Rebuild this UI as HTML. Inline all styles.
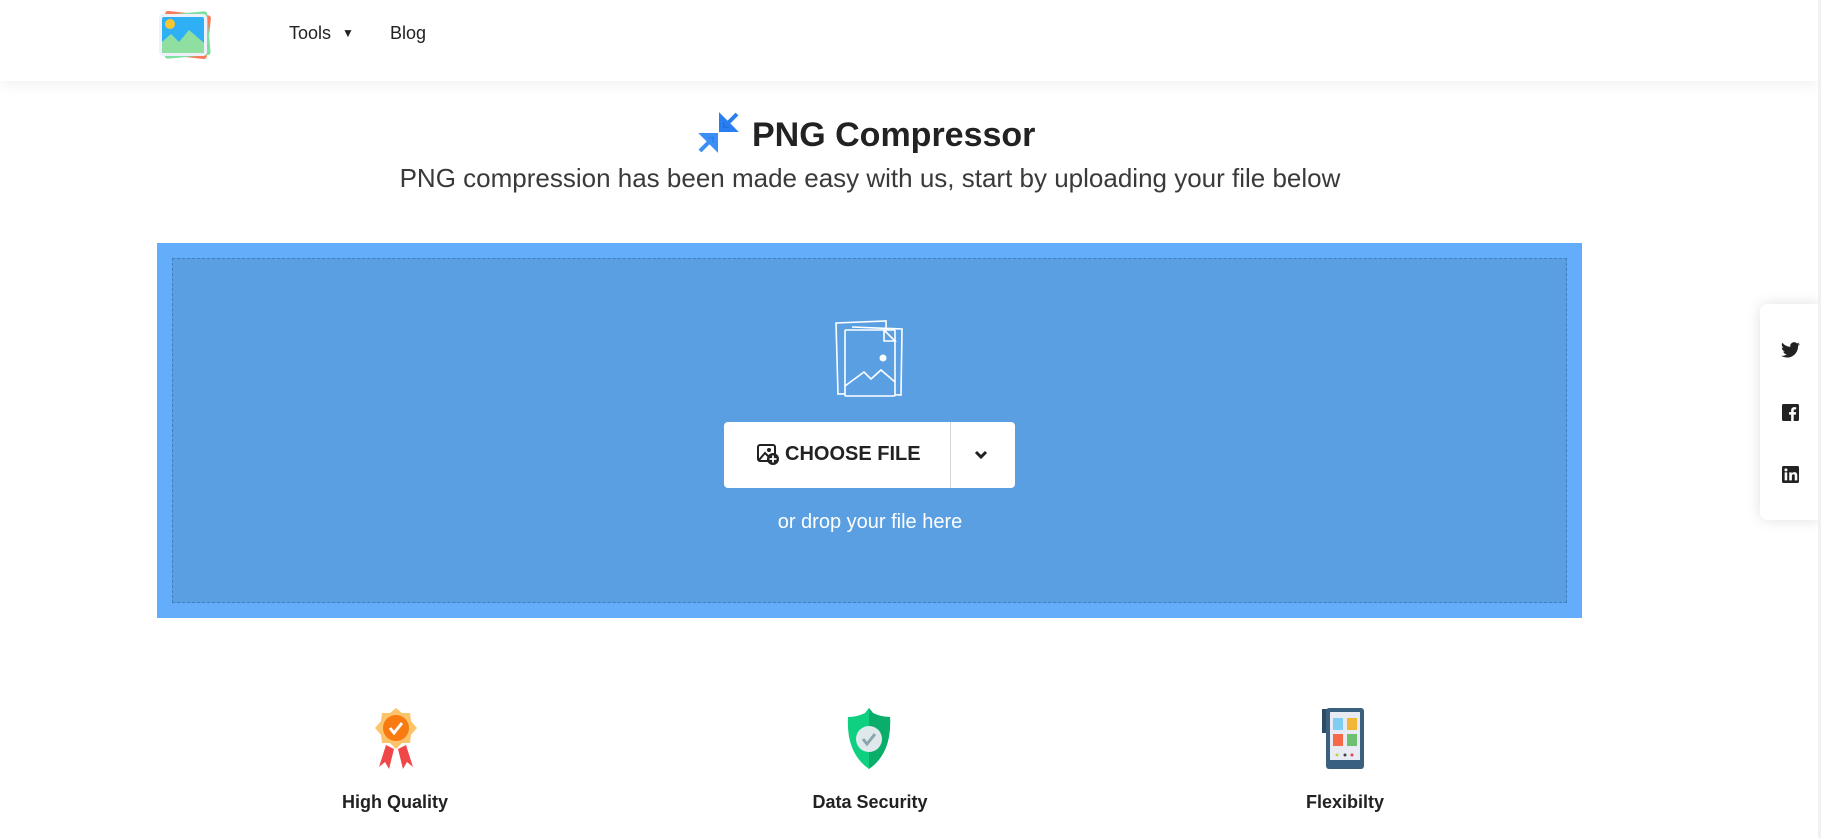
<!DOCTYPE html>
<html><head><meta charset="utf-8"><style>
*{margin:0;padding:0;box-sizing:border-box}
body{width:1821px;height:838px;overflow:hidden;background:#fff;font-family:"Liberation Sans",sans-serif;color:#212529;position:relative}
.hdr{position:absolute;left:0;top:0;width:1818px;height:81px;background:#fff;box-shadow:0 4px 14px rgba(0,0,0,.06)}
.nav{position:absolute;top:23px;font-size:18px;color:#222}
.abs{position:absolute}
.box{position:absolute;left:157px;top:243px;width:1425px;height:375px;background:#64adfb}
.inner{position:absolute;left:15px;top:15px;right:15px;bottom:15px;background:#5b9fe3;border:1px dashed #3f7fc0}
.btn{position:absolute;left:724px;top:422px;width:291px;height:66px;background:#fff;border-radius:4px}
.feat{position:absolute;top:792px;width:300px;text-align:center;font-size:18px;font-weight:bold;color:#222}
.side{position:absolute;left:1760px;top:304px;width:61px;height:216px;background:#fff;border-radius:8px 0 0 8px;box-shadow:0 0 14px rgba(0,0,0,.12)}
</style></head><body>
<div class="hdr"></div>
<svg class="abs" style="left:157px;top:10px" width="56" height="50" viewBox="0 0 56 50">
<rect x="6" y="3" width="46" height="44" rx="3" fill="#f87a5a" transform="rotate(6 29 25)"/>
<rect x="6" y="3" width="46" height="44" rx="3" fill="#7ee0a0" transform="rotate(-5 29 25)"/>
<rect x="2" y="4" width="48" height="42" rx="4" fill="#eef0fb"/>
<rect x="5" y="7" width="42" height="36" rx="2" fill="#2fb0f5"/>
<circle cx="13" cy="14" r="5" fill="#f8c630"/>
<path d="M5 43 L5 32 L14 24 L22 32 L32 20 L47 33 L47 43 Z" fill="#8fe0a0"/>
</svg>
<div class="nav" style="left:289px">Tools <span style="font-size:12px;position:relative;top:-2px;margin-left:6px">▼</span></div>
<div class="nav" style="left:390px">Blog</div>

<svg class="abs" style="left:697px;top:111px" width="43" height="43" viewBox="0 0 43 43">
<path d="M40 3 L28 15 M24 6 L24 19 L37 19 Z" stroke="#2a7ff0" stroke-width="4" fill="#1e6fe0"/>
<path d="M3 40 L15 28 M19 37 L19 24 L6 24 Z" stroke="#3c8ff5" stroke-width="4" fill="#2a7ff0"/>
</svg>
<div class="abs" style="left:752px;top:116px;font-size:34px;font-weight:bold;color:#222">PNG Compressor</div>
<div class="abs" style="left:0;width:1740px;text-align:center;top:163px;font-size:26px;color:#3a3a3a">PNG compression has been made easy with us, start by uploading your file below</div>

<div class="box"><div class="inner"></div></div>
<svg class="abs" style="left:834px;top:320px" width="72" height="80" viewBox="0 0 72 80" fill="none" stroke="#fff" stroke-width="1.6">
<path d="M2 3 L52 1 L53 73 L4 74 Z"/>
<path d="M18 7 L68 9 L67 75 L18 73"/>
<rect x="11" y="10" width="50" height="66" rx="1" fill="#5b9fe3"/>
<path d="M50 10 L61 21 L50 21 Z"/>
<path d="M11 66 L30 52 L37 59 L47 50 L61 62"/>
<circle cx="49" cy="38" r="3.5" fill="#fff" stroke="none"/>
</svg>
<div class="btn">
 <svg class="abs" style="left:33px;top:22px" width="22" height="21" viewBox="0 0 22 21">
 <rect x="1" y="1" width="17" height="16" rx="2" fill="none" stroke="#222" stroke-width="2"/>
 <path d="M2 16 L8 9 L12 13" stroke="#222" stroke-width="2" fill="none"/>
 <circle cx="12" cy="6" r="2" fill="#222"/>
 <circle cx="16" cy="15" r="6" fill="#222"/><path d="M16 11.5v7M12.5 15h7" stroke="#fff" stroke-width="1.8"/>
 </svg>
 <div class="abs" style="left:61px;top:21px;font-size:20px;font-weight:bold;color:#222">CHOOSE FILE</div>
 <div class="abs" style="left:226px;top:0;width:1px;height:66px;background:#d5d5d5"></div>
 <svg class="abs" style="left:250px;top:28px" width="14" height="10" viewBox="0 0 14 10"><path d="M2 2 L7 7 L12 2" stroke="#222" stroke-width="3" fill="none"/></svg>
</div>
<div class="abs" style="left:0;width:1740px;text-align:center;top:511px;font-size:20px;color:#fff">or drop your file here</div>

<svg class="abs" style="left:373px;top:707px" width="46" height="63" viewBox="0 0 46 63">
<path d="M13 38 L6 60 L12 55 L16 62 L21 42 Z M33 38 L40 60 L34 55 L30 62 L25 42 Z" fill="#f04848"/>
<path d="M23 1 L29 6 L37 6 L38 14 L44 21 L38 28 L37 36 L29 36 L23 42 L17 36 L9 36 L8 28 L2 21 L8 14 L9 6 L17 6 Z" fill="#fbc46a"/>
<circle cx="23" cy="21" r="13" fill="#f97a10"/>
<path d="M17 21 L21 26 L29 16" stroke="#fff" stroke-width="3" fill="none"/>
</svg>
<svg class="abs" style="left:846px;top:707px" width="46" height="63" viewBox="0 0 46 63">
<path d="M23 1 L27 6 Q35 10 44 10 Q46 46 23 62 Q0 46 2 10 Q11 10 19 6 Z" fill="#0fd080"/>
<path d="M23 1 L27 6 Q35 10 44 10 Q46 46 23 62 Z" fill="#0aae6a"/>
<circle cx="23" cy="32" r="13" fill="#dfe9ec"/>
<path d="M17 32 L21 37 L29 27" stroke="#8aa5ae" stroke-width="3" fill="none"/>
</svg>
<svg class="abs" style="left:1320px;top:707px" width="50" height="63" viewBox="0 0 50 63">
<path d="M2 2 L10 2 L10 26 L2 26 Z" fill="#2d4c63"/>
<rect x="6" y="1" width="38" height="61" rx="3" fill="#3a6080"/>
<rect x="10" y="5" width="30" height="48" fill="#e8ebf3"/>
<rect x="13" y="11" width="10" height="12" fill="#7fcdf0"/><rect x="27" y="11" width="10" height="12" fill="#f3b738"/>
<rect x="13" y="27" width="10" height="12" fill="#f66a4a"/><rect x="27" y="27" width="10" height="12" fill="#6cc070"/>
<circle cx="17" cy="48" r="1.5" fill="#c8d040"/><circle cx="25" cy="48" r="1.5" fill="#444"/><circle cx="32" cy="48" r="1.5" fill="#e04040"/>
</svg>
<div class="feat" style="left:245px">High Quality</div>
<div class="feat" style="left:720px">Data Security</div>
<div class="feat" style="left:1195px">Flexibilty</div>

<div class="side">
 <svg class="abs" style="left:21px;top:38px" width="19" height="16" viewBox="0 0 24 20"><path d="M24 2.4a10 10 0 0 1-2.8.8A5 5 0 0 0 23.3.5a9.8 9.8 0 0 1-3.1 1.2A4.9 4.9 0 0 0 11.8 6 14 14 0 0 1 1.7.9a4.9 4.9 0 0 0 1.5 6.6A4.9 4.9 0 0 1 1 6.9a4.9 4.9 0 0 0 3.9 4.9 4.9 4.9 0 0 1-2.2.1 4.9 4.9 0 0 0 4.6 3.4A9.9 9.9 0 0 1 0 17.3 14 14 0 0 0 7.5 19.5c9 0 14-7.5 14-14v-.6A10 10 0 0 0 24 2.4z" fill="#222"/></svg>
 <svg class="abs" style="left:22px;top:100px" width="17" height="17" viewBox="0 0 16 16"><rect width="16" height="16" rx="1.5" fill="#222"/><path d="M11 16V10h2l.3-2.4H11V6.2c0-.7.2-1.2 1.2-1.2h1.2V3a16 16 0 0 0-1.8-.1C10 2.9 8.6 3.9 8.6 5.9v1.7H6.6V10h2v6z" fill="#fff"/></svg>
 <svg class="abs" style="left:22px;top:162px" width="17" height="17" viewBox="0 0 16 16"><rect width="16" height="16" rx="1.5" fill="#222"/><rect x="2.5" y="6" width="2.4" height="7.5" fill="#fff"/><circle cx="3.7" cy="3.6" r="1.4" fill="#fff"/><path d="M6.8 6h2.3v1.1c.4-.7 1.3-1.3 2.5-1.3 2.3 0 2.8 1.5 2.8 3.5v4.2H12V9.8c0-.9 0-2-1.2-2s-1.5 1-1.5 2v3.7H6.8z" fill="#fff"/></svg>
</div>
<div class="abs" style="left:1818px;top:0;width:3px;height:838px;background:#f1f1f1"></div>
</body></html>
